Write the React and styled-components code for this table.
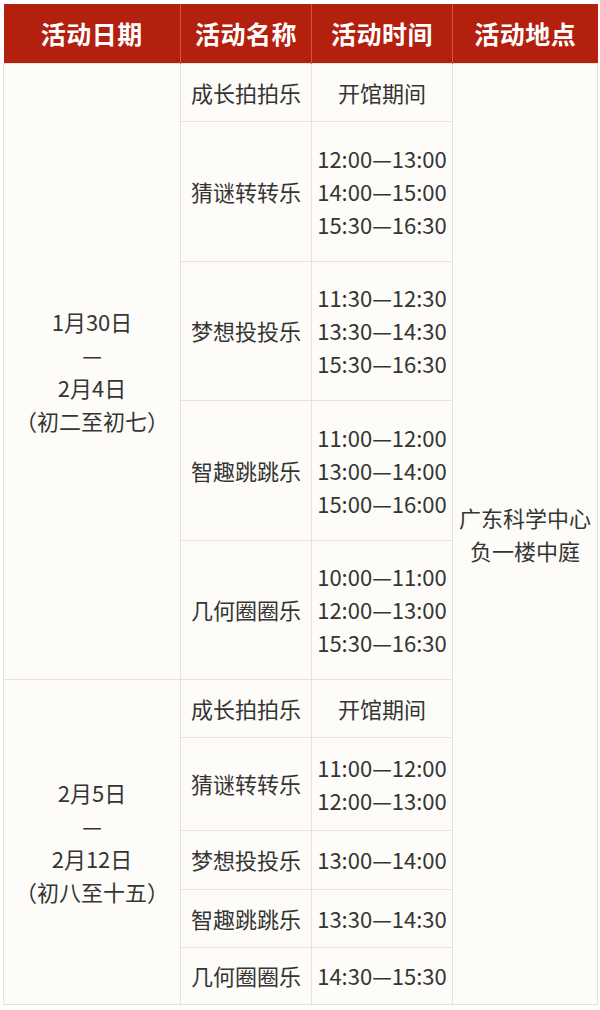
import React from 'react'
import styled, { createGlobalStyle } from 'styled-components';

const GlobalStyle = createGlobalStyle`
  body {
    margin: 0;
    background: #ffffff;
    font-family: "Noto Sans CJK SC", "Noto Sans", sans-serif;
  }
`;

const schedule = [
  {
    date: ['1月30日', '—', '2月4日', '（初二至初七）'],
    items: [
      { name: '成长拍拍乐', times: ['开馆期间'], height: 58 },
      { name: '猜谜转转乐', times: ['12:00—13:00', '14:00—15:00', '15:30—16:30'], height: 140 },
      { name: '梦想投投乐', times: ['11:30—12:30', '13:30—14:30', '15:30—16:30'], height: 139 },
      { name: '智趣跳跳乐', times: ['11:00—12:00', '13:00—14:00', '15:00—16:00'], height: 140 },
      { name: '几何圈圈乐', times: ['10:00—11:00', '12:00—13:00', '15:30—16:30'], height: 139 },
    ],
  },
  {
    date: ['2月5日', '—', '2月12日', '（初八至十五）'],
    items: [
      { name: '成长拍拍乐', times: ['开馆期间'], height: 58 },
      { name: '猜谜转转乐', times: ['11:00—12:00', '12:00—13:00'], height: 93 },
      { name: '梦想投投乐', times: ['13:00—14:00'], height: 59 },
      { name: '智趣跳跳乐', times: ['13:30—14:30'], height: 58 },
      { name: '几何圈圈乐', times: ['14:30—15:30'], height: 57 },
    ],
  },
];

const totalRows = schedule.reduce((n, g) => n + g.items.length, 0);

const App = () => {
  return (
    <>
      <GlobalStyle />
      <Wrapper>
        <Table>
          <colgroup>
            <col style={{ width: 177 }} />
            <col style={{ width: 131 }} />
            <col style={{ width: 141 }} />
            <col style={{ width: 145 }} />
          </colgroup>
          <thead>
            <HeadRow>
              <HeadCell>活动日期</HeadCell>
              <HeadCell>活动名称</HeadCell>
              <HeadCell>活动时间</HeadCell>
              <HeadCell>活动地点</HeadCell>
            </HeadRow>
          </thead>
          <tbody>
            {schedule.map((group, gi) =>
              group.items.map((item, i) => (
                <Row key={`${gi}-${i}`} $height={item.height}>
                  {i === 0 && (
                    <Cell rowSpan={group.items.length}>
                      {group.date.map((line) => (
                        <Line key={line}>{line}</Line>
                      ))}
                    </Cell>
                  )}
                  <Cell>{item.name}</Cell>
                  <Cell>
                    {item.times.map((t) => (
                      <Line key={t}>{t}</Line>
                    ))}
                  </Cell>
                  {gi === 0 && i === 0 && (
                    <Cell rowSpan={totalRows}>
                      <Line>广东科学中心</Line>
                      <Line>负一楼中庭</Line>
                    </Cell>
                  )}
                </Row>
              ))
            )}
          </tbody>
        </Table>
      </Wrapper>
    </>
  )
}

const Wrapper = styled.div`
  padding: 4px 3px 0 3px;
`;

const Table = styled.table`
  width: 594px;
  table-layout: fixed;
  border-collapse: collapse;
  background: #fdfcf8;
  color: #353535;
`;

const HeadRow = styled.tr`
  height: 59px;
  background: #b3200e;
`;

const HeadCell = styled.th`
  padding: 0;
  color: #ffffff;
  font-size: 25px;
  font-weight: 700;
  text-align: center;
  vertical-align: middle;
  border-left: 1px solid #c8584a;
  border-right: 1px solid #c8584a;
  letter-spacing: 0.5px;

  &:first-child {
    border-left: none;
  }
  &:last-child {
    border-right: none;
  }
`;

const Row = styled.tr`
  height: ${(props) => props.$height}px;
`;

const Cell = styled.td`
  padding: 0;
  border: 1px solid #e6e3dc;
  text-align: center;
  vertical-align: middle;
  font-size: 22px;
  line-height: 33px;
`;

const Line = styled.div`
  white-space: nowrap;
`;

export default App
